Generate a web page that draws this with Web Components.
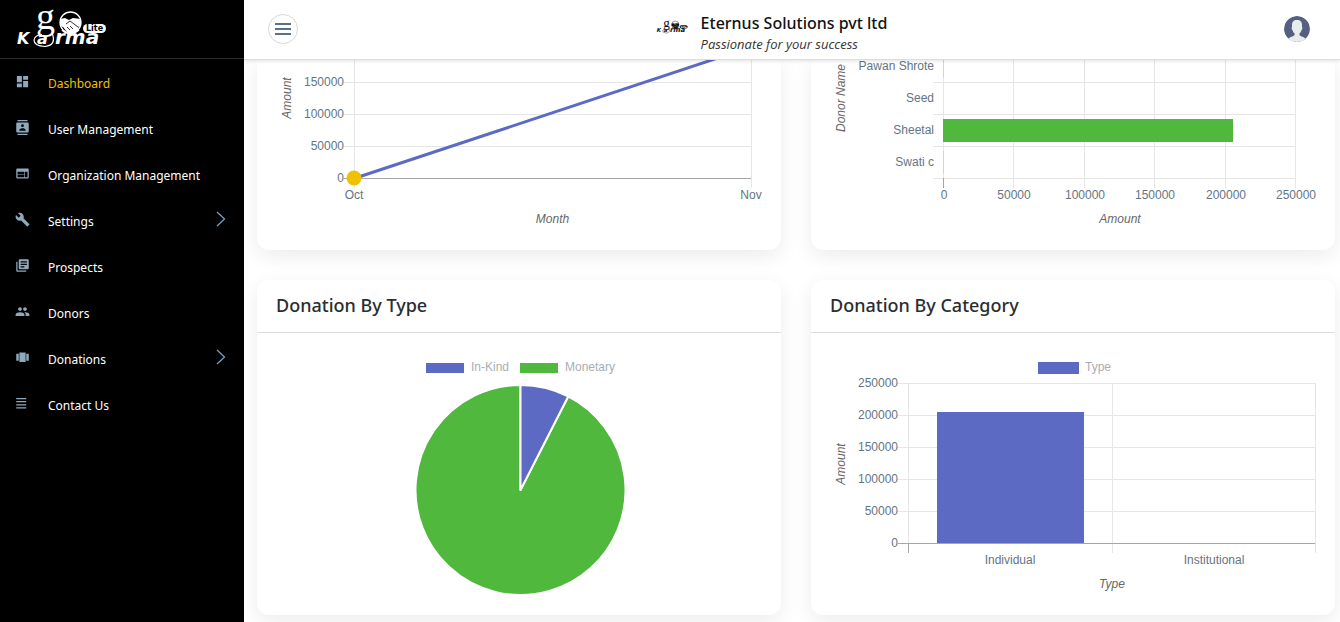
<!DOCTYPE html>
<html lang="en">
<head>
<meta charset="utf-8">
<title>goKarma Lite – Dashboard</title>
<style>
body { margin: 0; font-family: "Noto Sans", "Open Sans", sans-serif; background: #fff; color: #212529; }
</style>
</head>
<body>
<karma-shell>
  <karma-sidebar slot="sidebar">
    <karma-item icon="dashboard" active>Dashboard</karma-item>
    <karma-item icon="contacts">User Management</karma-item>
    <karma-item icon="web">Organization Management</karma-item>
    <karma-item icon="build" expandable>Settings</karma-item>
    <karma-item icon="library">Prospects</karma-item>
    <karma-item icon="people">Donors</karma-item>
    <karma-item icon="carousel" expandable>Donations</karma-item>
    <karma-item icon="lines">Contact Us</karma-item>
  </karma-sidebar>
  <karma-topbar slot="topbar">
    <span slot="name">Eternus Solutions pvt ltd</span>
    <span slot="tagline">Passionate for your success</span>
  </karma-topbar>
  <karma-card continued><line-chart></line-chart></karma-card>
  <karma-card continued><donor-chart></donor-chart></karma-card>
  <karma-card><span slot="title">Donation By Type</span><pie-chart></pie-chart></karma-card>
  <karma-card><span slot="title">Donation By Category</span><category-chart></category-chart></karma-card>
</karma-shell>

<script>
const define = (name, html, base = HTMLElement) => {
  customElements.define(name, class extends base {
    constructor() {
      super();
      this.attachShadow({ mode: 'open' }).innerHTML = html;
    }
  });
};

define('karma-shell', `
  <style>
    :host { display: grid; grid-template-columns: 244px minmax(0, 1fr); height: 100vh; overflow: hidden; }
    .page { display: flex; flex-direction: column; min-width: 0; min-height: 0; }
    main { flex: 1; min-height: 0; overflow: auto; scrollbar-width: none; display: grid;
      grid-template-columns: repeat(2, minmax(0, 1fr)); gap: 30px; align-content: start;
      padding: 0 5px 7px 13px; }
  </style>
  <slot name="sidebar"></slot>
  <div class="page">
    <slot name="topbar"></slot>
    <main><slot></slot></main>
  </div>`);

define('karma-logo', `
  <style>
    :host { display: block; color: inherit; }
    svg { display: block; width: 100%; height: 100%; overflow: visible; }
  </style>
  <svg viewBox="0 0 92 38" role="img" aria-label="goKarma Lite">
    <g fill="currentColor">
      <text x="21" y="19" font-family="Liberation Serif, serif" font-size="38">g</text>
      <circle cx="55.500" cy="12.500" r="10.500" fill="none" stroke="currentColor" stroke-width="1.300"/>
      <path d="M45 9L50 8L54 10L58 8L66 9L66 16L63 17L64 20L60 22L57 24L52 22L48 17L45 16Z"/>
      <path d="M51 14L55 11L63 17M52 17L55 20M55 16L58 19" fill="none" stroke="var(--logo-ground, #000)" stroke-width=".8"/>
      <path d="M47 20Q51 24 56 23.500Q61 23 64 20" fill="none" stroke="currentColor" stroke-width="1.500"/>
      <rect x="68" y="14" width="23" height="9" rx="4.500"/>
      <g font-family="DejaVu Sans, sans-serif" font-weight="700" font-style="italic">
        <text x="2" y="34" font-size="16">K</text>
        <text x="22" y="34" font-size="16">a</text>
        <text x="40" y="34" font-size="20">rma</text>
      </g>
      <path d="M37 23Q42 35 30 36.500Q19 36 19 30Q20 25 27 24.500" fill="none" stroke="currentColor" stroke-width="1.200"/>
    </g>
    <text x="71" y="21" fill="var(--logo-ground, #000)" font-family="DejaVu Sans, sans-serif" font-weight="700" font-size="8">Lite</text>
  </svg>`);

define('karma-sidebar', `
  <style>
    :host { display: block; background: #000; color: #fff; }
    header { height: 59px; border-bottom: 1px solid #2b2b2b; display: flex; align-items: center; padding-left: 15px; box-sizing: border-box; }
    karma-logo { width: 92px; height: 38px; }
    nav { padding-top: 2px; }
  </style>
  <header><karma-logo></karma-logo></header>
  <nav aria-label="Main"><slot></slot></nav>`);

const icons = {
  dashboard: '<path d="M3 13h8V3H3zm0 8h8v-6H3zm10 0h8V11h-8zm0-18v6h8V3z"/>',
  contacts: '<path d="M20 0H4v2h16zM4 24h16v-2H4zM20 4H4c-1.100 0-2 .9-2 2v12c0 1.100.9 2 2 2h16c1.100 0 2-.9 2-2V6c0-1.100-.9-2-2-2zm-8 2.750a2.250 2.250 0 1 1 0 4.500 2.250 2.250 0 0 1 0-4.500zM17 17H7v-1.500c0-1.670 3.330-2.500 5-2.500s5 .83 5 2.500z"/>',
  web: '<path d="M20 4H4c-1.100 0-2 .9-2 2v12c0 1.100.9 2 2 2h16c1.100 0 2-.9 2-2V6c0-1.100-.9-2-2-2zm-5 14H4v-4h11zm0-5H4V9h11zm5 5h-4V9h4z"/>',
  build: '<path d="M22.700 19l-9.100-9.100c.9-2.300.4-5-1.500-6.900-2-2-5-2.400-7.400-1.300L9 6 6 9 1.600 4.700C.4 7.100.9 10.100 2.900 12.100c1.900 1.900 4.600 2.400 6.900 1.500l9.100 9.100c.4.4 1 .4 1.400 0l2.300-2.300c.5-.4.5-1.100.1-1.400z"/>',
  library: '<path d="M4 6H2v14c0 1.100.9 2 2 2h14v-2H4zm16-4H8c-1.100 0-2 .9-2 2v12c0 1.100.9 2 2 2h12c1.100 0 2-.9 2-2V4c0-1.100-.9-2-2-2zm-1 9H9V9h10zm-4 4H9v-2h6zm4-8H9V5h10z"/>',
  people: '<path d="M16 11c1.660 0 2.990-1.340 2.990-3S17.660 5 16 5s-3 1.340-3 3 1.340 3 3 3zm-8 0c1.660 0 2.990-1.340 2.990-3S9.660 5 8 5 5 6.340 5 8s1.340 3 3 3zm0 2c-2.330 0-7 1.170-7 3.500V19h14v-2.500C15 14.170 10.330 13 8 13zm8 0c-.29 0-.62.02-.97.05 1.160.84 1.970 1.970 1.970 3.450V19h6v-2.500c0-2.330-4.670-3.500-7-3.500z"/>',
  carousel: '<path d="M7 19h10V4H7zm-5-2h4V6H2zM18 6v11h4V6z"/>',
  lines: '<path d="M2 3h16v2H2zm0 5h16v2H2zm0 5h16v2H2zm0 5h16v2H2z"/>'
};

customElements.define('karma-item', class extends HTMLElement {
  connectedCallback() {
    this.attachShadow({ mode: 'open' }).innerHTML = `
    <style>
      :host { display: block; color: #fff; }
      :host([active]) { color: #efc100; }
      a { display: grid; grid-template-columns: 16px 1fr 10px; column-gap: 17px; align-items: center;
        height: 46px; padding: 0 18px 0 15px; color: inherit; text-decoration: none; font-size: 12px; line-height: 20px; white-space: nowrap; }
      .icon { width: 15px; height: 15px; fill: #8fa9bc; margin-bottom: 5px; }
      .more { width: 10px; height: 16px; fill: none; stroke: #6ba3c4; margin-bottom: 6px; }
    </style>
    <a href="#"><svg class="icon" viewBox="0 0 24 24" aria-hidden="true">${icons[this.getAttribute('icon')]}</svg>
      <span><slot></slot></span>
      ${this.hasAttribute('expandable') ? '<svg class="more" viewBox="0 0 10 16" aria-hidden="true"><path d="M1 1l7.500 7L1 15" stroke-width="1.300"/></svg>' : ''}
    </a>`;
  }
});

define('karma-topbar', `
  <style>
    :host { display: grid; grid-template-columns: 1fr auto 1fr; align-items: center; height: 60px; box-sizing: border-box;
      padding: 0 30px 2px 24px; background: #fff; border-bottom: 1px solid #ddd; box-shadow: 0 1px 4px rgba(0,0,0,.12); position: relative; z-index: 1; }
    button { padding: 0; background: #fff; border-radius: 50%; }
    .menu { width: 30px; height: 30px; border: 1px solid #d5d8dc; display: grid; place-items: center; }
    .menu svg { width: 16px; height: 14px; stroke: #5d7186; stroke-width: 2; }
    .brand { display: flex; align-items: center; gap: 13px; padding: 9px 35px 0 0; }
    karma-logo { width: 32px; height: 14px; margin-bottom: 12px; color: #111; --logo-ground: #fff; }
    .name { font-size: 16px; line-height: 22px; font-weight: 500; color: #111; }
    .tagline { font-family: "Open Sans", "Noto Sans", sans-serif; font-size: 13px; line-height: 20px; font-style: italic; color: #333; }
    .user { justify-self: end; width: 26px; height: 26px; border: 0; overflow: hidden; }
    .user svg { display: block; }
  </style>
  <button class="menu" aria-label="Toggle menu"><svg viewBox="0 0 16 14"><path d="M0 2h16M0 7h16M0 12h16"/></svg></button>
  <div class="brand">
    <karma-logo></karma-logo>
    <div><div class="name"><slot name="name"></slot></div><div class="tagline"><slot name="tagline"></slot></div></div>
  </div>
  <button class="user" aria-label="Account"><svg width="26" height="26" viewBox="0 0 26 26">
    <circle cx="13" cy="13" r="13" fill="#556080"/>
    <path fill="#e7eced" d="M13 4C9.500 4 8 6 8 9v2c-.8.800-.3 2.500.5 3 .3 1.500 1 2.500 2 3.300V19c0 1-5 2-6.500 4 2 2 5 3 9 3s7-1 9-3c-1.500-2-6.500-3-6.500-4v-1.700c1-.8 1.700-1.800 2-3.300.8-.5 1.300-2.200.5-3V9c0-3-1.500-5-5-5z"/>
  </svg></button>`);

customElements.define('karma-card', class extends HTMLElement {
  connectedCallback() {
    const continued = this.hasAttribute('continued');
    this.attachShadow({ mode: 'open' }).innerHTML = `
    <style>
      :host { display: block; min-width: 0; background: #fff; border-radius: 12px; box-shadow: 0 6px 20px rgba(0,0,0,.08); }
      :host([continued]) { border-radius: 0 0 12px 12px; }
      h2 { margin: 0; padding: 12px 19px 14px; font-size: 18px; line-height: 26px; font-weight: 500; color: #2b2d30; border-bottom: 1px solid #dcdcdc; }
    </style>
    ${continued ? '' : '<h2><slot name="title"></slot></h2>'}
    <slot></slot>`;
  }
});

/* Shared base: redraws its SVG whenever the card changes width. */
const INDIGO = '#5c6ac4', GREEN = '#50b83c', GRID = '#e6e6e6', AXIS = '#a6a6a6';
class Chart extends HTMLElement {
  constructor() {
    super();
    this.attachShadow({ mode: 'open' }).innerHTML = `
    <style>
      :host { display: block; height: ${this.height}px; }
      svg { display: block; width: 100%; height: 100%; font: 12px "Liberation Sans", Arial, sans-serif; }
      .tick { fill: #637585; } .title { fill: #666; font-style: italic; } .key { fill: #aaadb2; }
      .end { text-anchor: end; } .mid { text-anchor: middle; }
    </style><svg role="img"></svg>`;
  }
  connectedCallback() {
    this.render();
    new ResizeObserver(() => this.render()).observe(this);
  }
  render() { this.shadowRoot.querySelector('svg').innerHTML = this.draw(Math.round(this.clientWidth)); }
  text(x, y, label, cls) { return `<text x="${x}" y="${y + 4}" class="${cls}">${label}</text>`; }
  upright(x, y, label) { return `<text transform="translate(${x + 4} ${y}) rotate(-90)" class="title mid">${label}</text>`; }
  path(d, color = GRID) { return `<path d="${d}" stroke="${color}" fill="none" shape-rendering="crispEdges"/>`; }
  rect(x, y, w, h, color) { return `<rect x="${x}" y="${y}" width="${w}" height="${h}" fill="${color}"/>`; }
  amounts(left, right, base, count) {
    let out = '';
    for (let i = 0; i <= count; i++) {
      const y = base - i * 32;
      out += this.path(`M${left - 10} ${y + .5}H${right}`, i ? GRID : AXIS) + this.text(left - 10, y, i * 50000, 'tick end');
    }
    return out;
  }
}

customElements.define('line-chart', class extends Chart {
  get height() { return 190; }
  draw(w) {
    const left = 97, right = w - 30, base = 118;
    return this.path(`M${left + .5} 0V${base + 10}M${right + .5} 0V${base + 10}`)
      + this.amounts(left, right, base, 3)
      + `<path d="M${left} ${base + .5}L${right} ${base - 131}" stroke="${INDIGO}" stroke-width="3"/>`
      + `<circle cx="${left}" cy="${base}" r="7.500" fill="#efc100"/>`
      + this.text(left, 135, 'Oct', 'tick mid') + this.text(right, 135, 'Nov', 'tick mid')
      + this.text((left + right) / 2, 159, 'Month', 'title mid') + this.upright(30, 38, 'Amount');
  }
});

customElements.define('donor-chart', class extends Chart {
  get height() { return 190; }
  draw(w) {
    const left = 132, right = w - 40, base = 118, step = (right - left) / 5;
    let out = '';
    for (let i = 0; i <= 5; i++) {
      const x = Math.round(left + i * step);
      out += this.path(`M${x + .5} 0V${base + 10}`) + this.text(x + 1, 135, i * 50000, 'tick mid');
    }
    ['Swati c', 'Sheetal', 'Seed', 'Pawan Shrote'].forEach((name, i) => {
      const y = base - i * 32;
      out += this.path(`M${left - 10} ${y + .5}H${right}`) + this.text(left - 9, y - 16, name, 'tick end');
    });
    return out + this.path(`M${left + .5} ${base}v10`, AXIS)
      + this.rect(left, 59, step * 4.12, 23, GREEN)
      + this.path(`M${left + .5} 91v23M${left + .5} 0v18`, '#c9dcc6')
      + this.text((left + right) / 2 + 1, 159, 'Amount', 'title mid') + this.upright(30, 38, 'Donor Name');
  }
});

customElements.define('pie-chart', class extends Chart {
  get height() { return 282; }
  draw(w) {
    const cx = w / 2 + 1.5, cy = 157, r = 105, a = 27 * Math.PI / 180;
    const ex = cx + r * Math.sin(a), ey = cy - r * Math.cos(a), x = Math.floor(cx) - 94;
    return `<g stroke="#fff" stroke-width="2" stroke-linejoin="round">
        <path fill="${GREEN}" d="M${cx} ${cy}L${ex} ${ey}A${r} ${r} 0 1 1 ${cx} ${cy - r}Z"/>
        <path fill="${INDIGO}" d="M${cx} ${cy}V${cy - r}A${r} ${r} 0 0 1 ${ex} ${ey}Z"/></g>`
      + this.rect(x, 30, 38, 10, INDIGO) + this.text(x + 45, 34, 'In-Kind', 'key')
      + this.rect(x + 94, 30, 38, 10, GREEN) + this.text(x + 139, 34, 'Monetary', 'key');
  }
});

customElements.define('category-chart', class extends Chart {
  get height() { return 282; }
  draw(w) {
    const left = 97, right = w - 20, base = 210, mid = Math.round((left + right) / 2), half = mid - left;
    return this.path(`M${left + .5} 50V${base + 10}M${mid + .5} 50V${base + 10}M${right + .5} 50V${base + 10}`)
      + this.amounts(left, right, base, 5)
      + this.path(`M${left + .5} ${base}v10`, AXIS)
      + this.rect(left + Math.round(half * .14), base - 131, Math.round(half * .72), 131, INDIGO)
      + this.rect(mid - 74, 29, 41, 12, INDIGO) + this.text(mid - 27, 34, 'Type', 'key')
      + this.text(left + half / 2, 227, 'Individual', 'tick mid')
      + this.text(mid + half / 2, 227, 'Institutional', 'tick mid')
      + this.text(mid, 251, 'Type', 'title mid') + this.upright(30, 131, 'Amount');
  }
});
</script>
</body>
</html>
